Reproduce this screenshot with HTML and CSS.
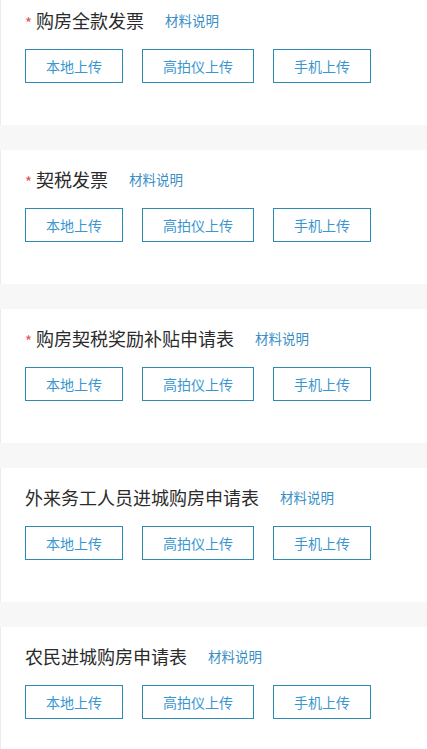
FILE: index.html
```html
<!doctype html>
<html lang="zh-CN">
  <head>
    <meta charset="UTF-8" />
    <meta name="viewport" content="width=device-width, initial-scale=1.0" />
    <title>材料上传</title>
    <link rel="stylesheet" href="styles.css">
  </head>
  <body>
    <div class="list">
      <section class="item">
        <div class="item-head">
          <span class="required">*</span>
          <h3>购房全款发票</h3>
          <a href="#" class="note">材料说明</a>
        </div>
        <div class="actions">
          <a href="#" class="btn">本地上传</a>
          <a href="#" class="btn">高拍仪上传</a>
          <a href="#" class="btn">手机上传</a>
        </div>
      </section>

      <section class="item">
        <div class="item-head">
          <span class="required">*</span>
          <h3>契税发票</h3>
          <a href="#" class="note">材料说明</a>
        </div>
        <div class="actions">
          <a href="#" class="btn">本地上传</a>
          <a href="#" class="btn">高拍仪上传</a>
          <a href="#" class="btn">手机上传</a>
        </div>
      </section>

      <section class="item">
        <div class="item-head">
          <span class="required">*</span>
          <h3>购房契税奖励补贴申请表</h3>
          <a href="#" class="note">材料说明</a>
        </div>
        <div class="actions">
          <a href="#" class="btn">本地上传</a>
          <a href="#" class="btn">高拍仪上传</a>
          <a href="#" class="btn">手机上传</a>
        </div>
      </section>

      <section class="item">
        <div class="item-head">
          <h3>外来务工人员进城购房申请表</h3>
          <a href="#" class="note">材料说明</a>
        </div>
        <div class="actions">
          <a href="#" class="btn">本地上传</a>
          <a href="#" class="btn">高拍仪上传</a>
          <a href="#" class="btn">手机上传</a>
        </div>
      </section>

      <section class="item">
        <div class="item-head">
          <h3>农民进城购房申请表</h3>
          <a href="#" class="note">材料说明</a>
        </div>
        <div class="actions">
          <a href="#" class="btn">本地上传</a>
          <a href="#" class="btn">高拍仪上传</a>
          <a href="#" class="btn">手机上传</a>
        </div>
      </section>
    </div>
  </body>
</html>
```

FILE: styles.css
```css
* {
  box-sizing: border-box;
  margin: 0;
  padding: 0;
}
body {
  font-family: "Noto Sans CJK SC", "Noto Sans", sans-serif;
  background: #f7f7f7;
  color: #333;
  overflow: hidden;
}
.list {
  margin-top: -9px;
}
.item {
  background: #ffffff;
  border-left: 1px solid #ececec;
  padding: 17px 0 42px 24px;
  margin-bottom: 25px;
}
.item-head {
  display: flex;
  align-items: center;
  height: 24px;
}
.required {
  color: #e5554f;
  font-size: 15px;
  width: 11px;
  padding-top: 4px;
}
.item-head h3 {
  font-size: 18px;
  font-weight: normal;
  color: #2b2b2b;
  line-height: 24px;
}
.note {
  margin-left: 21px;
  font-size: 13.5px;
  color: #3a8fc6;
  text-decoration: none;
}
.actions {
  display: flex;
  gap: 19px;
  margin-top: 17px;
}
.btn {
  display: inline-block;
  height: 34px;
  line-height: 32px;
  padding: 0 20px;
  border: 1px solid #2c8bb2;
  color: #3996cf;
  font-size: 14px;
  text-decoration: none;
  white-space: nowrap;
}
```
